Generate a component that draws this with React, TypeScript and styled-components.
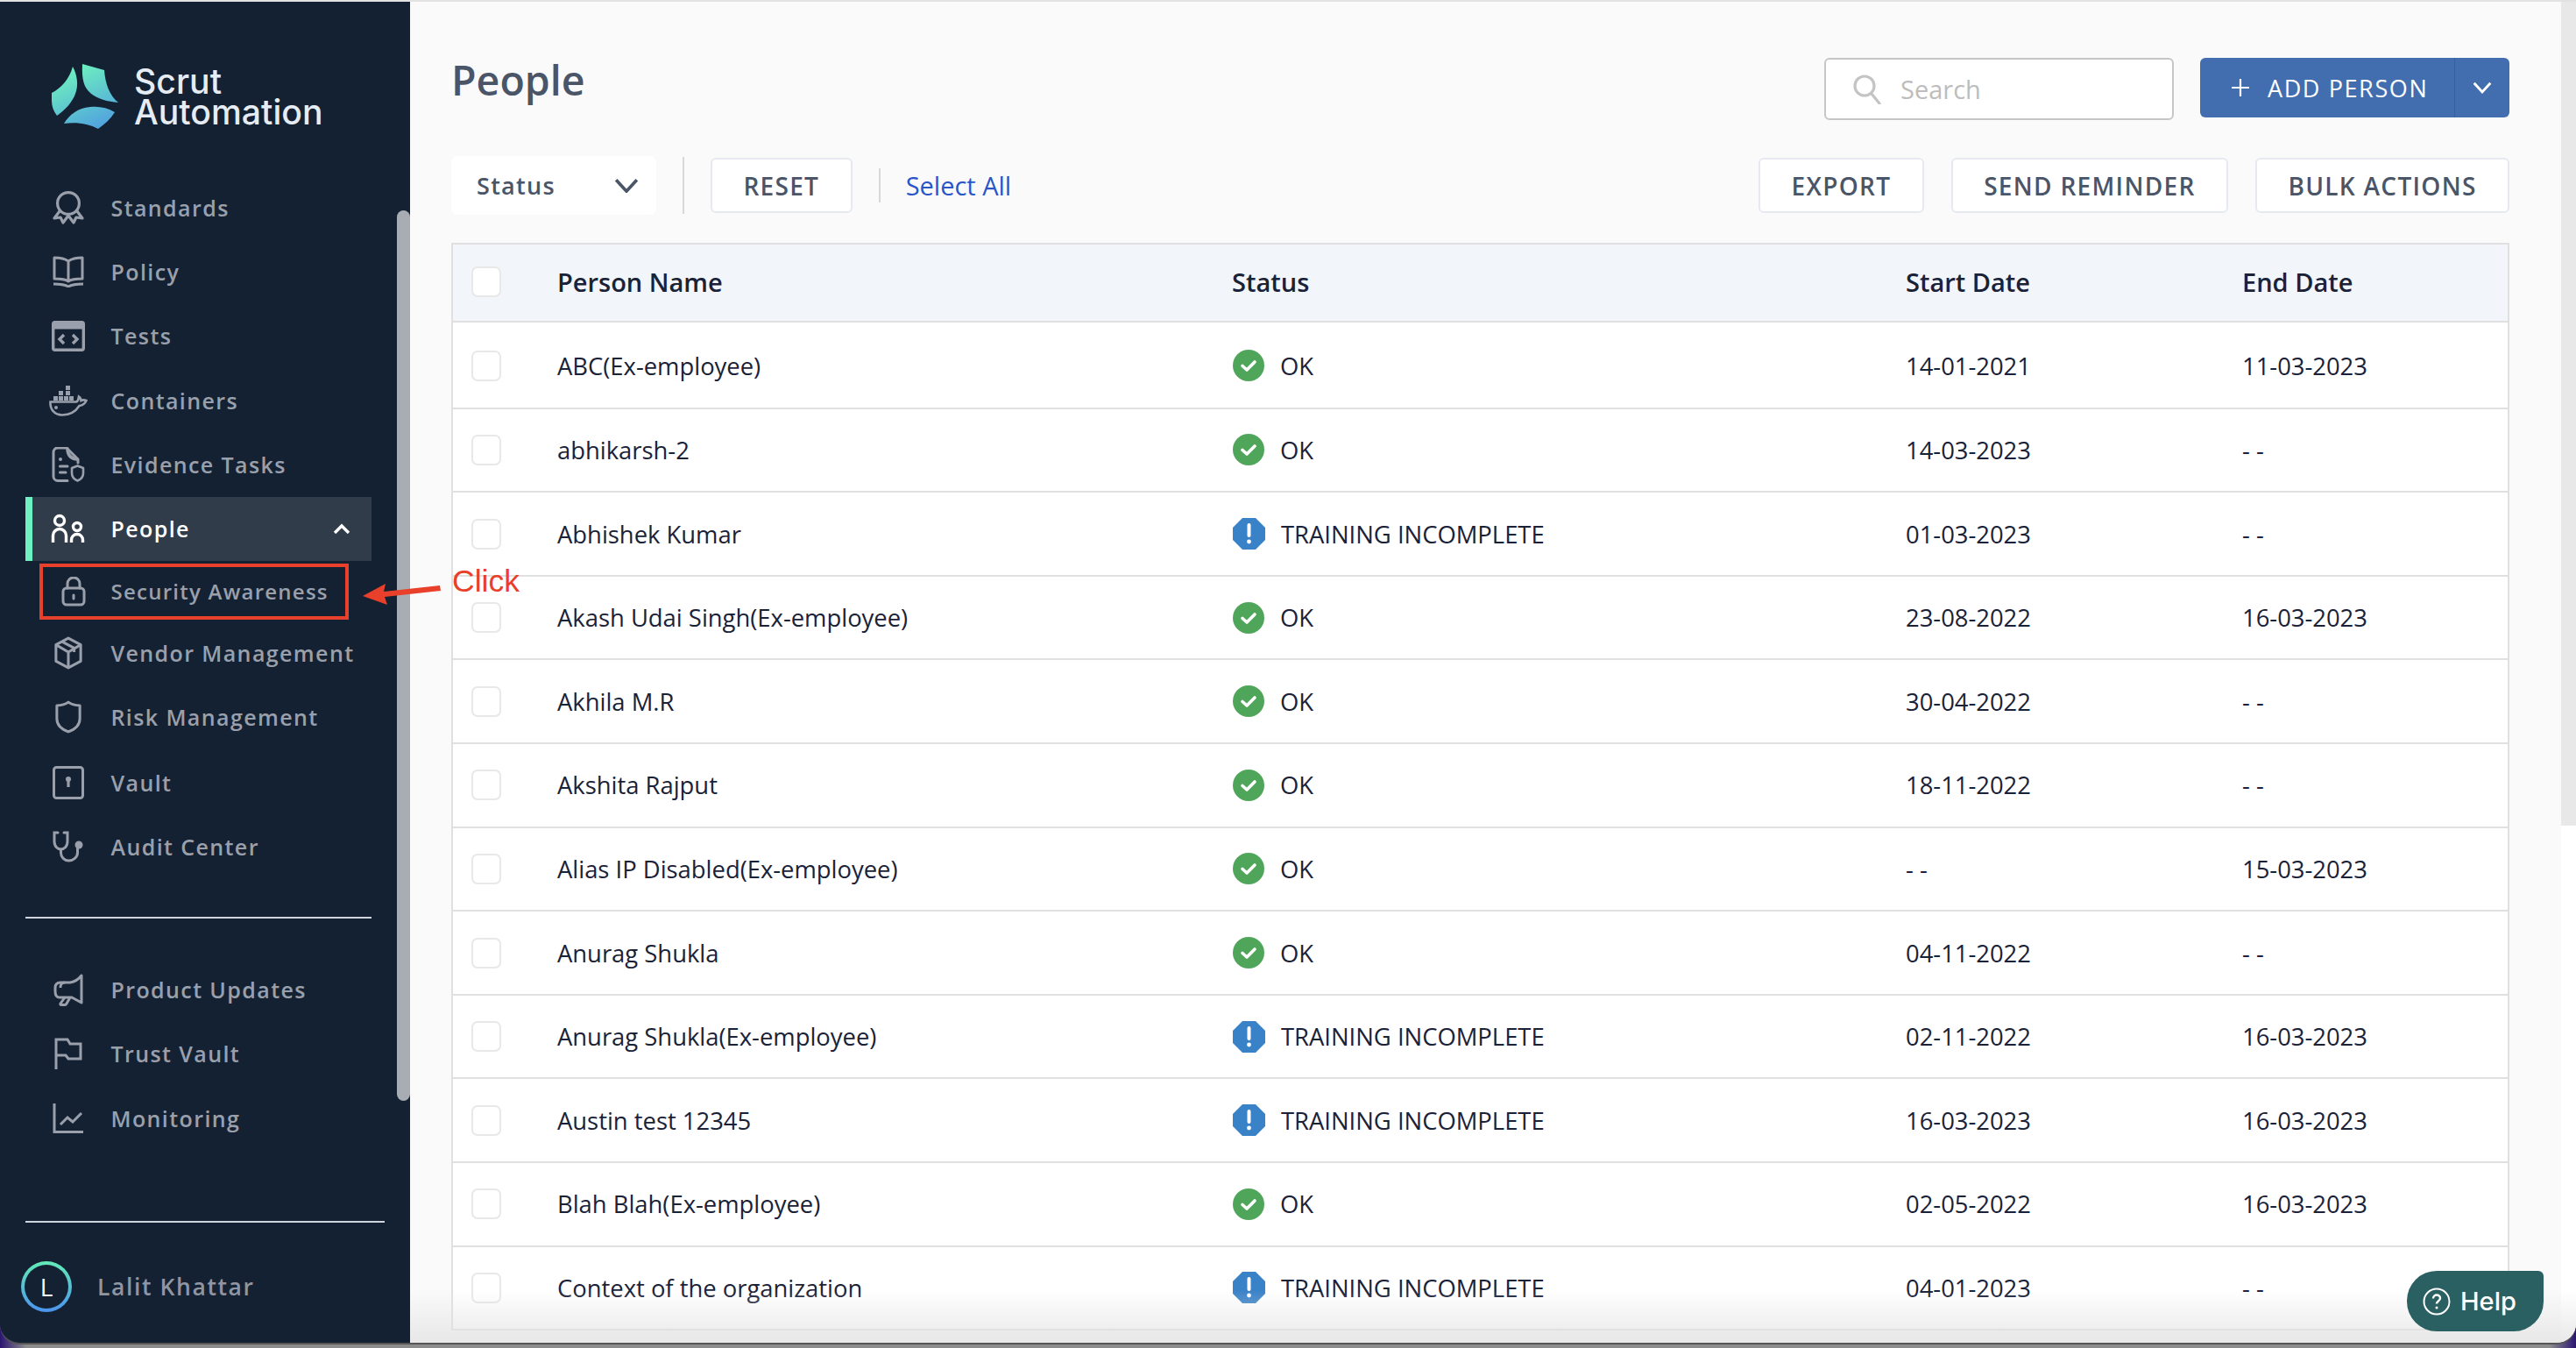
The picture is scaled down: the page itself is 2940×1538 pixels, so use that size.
import React from 'react';
import styled, { createGlobalStyle } from 'styled-components';

const GlobalStyle = createGlobalStyle`
  html, body {
    margin: 0;
    padding: 0;
    background: #8c8c8c;
  }
  * {
    box-sizing: border-box;
  }
`;

const Desktop = styled.div`
  width: 2940px;
  height: 1538px;
  overflow: hidden;
  display: flex;
  flex-direction: column;
  background: linear-gradient(90deg, #2a1470 0, #8c8c8c 30px, #8c8c8c 2910px, #2a1470 100%);
  font-family: "Open Sans", sans-serif;
`;

const TopEdge = styled.div`
  height: 2px;
  flex: none;
  background: #e2e2e2;
`;

const Window = styled.div`
  position: relative;
  height: 1530px;
  flex: none;
  display: flex;
  overflow: hidden;
  border-radius: 0 0 22px 22px;
  box-shadow: 0 2px 0 #555;
`;

const Sidebar = styled.aside`
  position: relative;
  width: 468px;
  flex: none;
  display: flex;
  flex-direction: column;
  background: #142133;
  padding-top: 70px;
`;

const SideScroll = styled.div`
  position: absolute;
  right: 0;
  top: 238px;
  width: 15px;
  height: 1016px;
  border-radius: 8px;
  background: #a8acb3;
`;

const Logo = styled.div`
  display: flex;
  align-items: center;
  gap: 18px;
  padding-left: 59px;
  height: 76px;
  margin-bottom: 52px;
`;

const LogoText = styled.div`
  font-family: Inter, sans-serif;
  font-size: 39.2px;
  font-weight: 500;
  line-height: 35px;
  color: #e6ecf4;
`;

const NavList = styled.nav<{ $top?: number }>`
  display: flex;
  flex-direction: column;
  margin-top: ${({ $top }) => $top ?? 0}px;
`;

const NavItem = styled.div<{ $active?: boolean; $height?: number }>`
  position: relative;
  display: flex;
  align-items: center;
  flex: none;
  height: ${({ $height }) => $height ?? 73.4}px;
  width: ${({ $active }) => ($active ? '395px' : '424px')};
  margin-left: 29px;
  padding-left: ${({ $active }) => ($active ? '22px' : '30px')};
  background: ${({ $active }) => ($active ? '#303c4a' : 'transparent')};
  border-left: ${({ $active }) => ($active ? '8px solid #6ef0c0' : '0')};
  color: ${({ $active }) => ($active ? '#ffffff' : '#9aa0ab')};
`;

const NavIcon = styled.span`
  width: 38px;
  height: 40px;
  flex: none;
  display: flex;
  align-items: center;
  justify-content: center;
  margin-right: 29.5px;
  svg {
    display: block;
    flex: none;
  }
`;

const NavLabel = styled.span<{ $small?: boolean }>`
  font-size: ${({ $small }) => ($small ? '24px' : '25px')};
  font-weight: 600;
  letter-spacing: ${({ $small }) => ($small ? '1.25px' : '1.4px')};
  white-space: nowrap;
  flex: 1;
`;

const NavChevron = styled.span`
  display: flex;
  margin-right: 24px;
`;

const SideRule = styled.div<{ $width: number; $top: number }>`
  height: 2px;
  width: ${({ $width }) => $width}px;
  margin: ${({ $top }) => $top}px 0 0 29px;
  flex: none;
  background: #cfd5dc;
`;

const User = styled.div`
  display: flex;
  align-items: center;
  gap: 29px;
  padding-left: 24px;
  margin-top: 44px;
`;

const Avatar = styled.div`
  width: 58px;
  height: 58px;
  border-radius: 50%;
  padding: 4px;
  background: linear-gradient(180deg, #63ecb8, #4b93ee);
  flex: none;
`;

const AvatarInner = styled.div`
  width: 100%;
  height: 100%;
  border-radius: 50%;
  background: #142133;
  color: #fff;
  display: flex;
  align-items: center;
  justify-content: center;
  font-size: 28px;
  font-weight: 500;
`;

const UserName = styled.div`
  font-size: 26.5px;
  font-weight: 600;
  letter-spacing: 1.6px;
  color: #8f95a1;
`;

const Main = styled.main`
  position: relative;
  flex: 1;
  min-width: 0;
  background: #fafafa;
  padding: 0 76px 0 47px;
`;

const PageScrollTrack = styled.div`
  position: absolute;
  right: 0;
  top: 0;
  bottom: 0;
  width: 17px;
  background: #ffffff;
`;

const PageScrollThumb = styled.div`
  width: 100%;
  height: 940px;
  background: #e8e8e8;
`;

const Header = styled.div`
  display: flex;
  align-items: flex-start;
  justify-content: space-between;
  height: 174px;
  padding-top: 64px;
`;

const Title = styled.h1`
  margin: -4px 0 0;
  font-size: 46.5px;
  line-height: 58px;
  font-weight: 600;
  color: #4a5568;
`;

const HeaderRight = styled.div`
  display: flex;
  gap: 30px;
`;

const SearchBox = styled.div`
  width: 399px;
  height: 71px;
  display: flex;
  align-items: center;
  gap: 22px;
  padding-left: 31px;
  background: #fff;
  border: 2px solid #c6c6c6;
  border-radius: 6px;
  color: #bdbdbd;
  font-size: 29px;
`;

const AddPerson = styled.div`
  width: 353px;
  height: 68px;
  display: flex;
  border-radius: 6px;
  background: #426eb0;
  color: #fff;
`;

const AddMain = styled.div`
  width: 291px;
  display: flex;
  align-items: center;
  gap: 21px;
  padding-left: 36px;
  font-size: 27px;
  font-weight: 500;
  letter-spacing: 1.6px;
  white-space: nowrap;
  border-right: 1px solid #35609f;
`;

const AddCaret = styled.div`
  flex: 1;
  display: flex;
  align-items: center;
  justify-content: center;
`;

const Filters = styled.div`
  display: flex;
  align-items: center;
  height: 67px;
  margin-top: 2px;
`;

const StatusSelect = styled.div`
  width: 234px;
  height: 67px;
  display: flex;
  align-items: center;
  justify-content: space-between;
  padding: 0 20px 0 29px;
  background: #fff;
  border-radius: 7px;
  font-size: 27px;
  font-weight: 600;
  letter-spacing: 1.3px;
  color: #4a5568;
`;

const VRule = styled.div<{ $height: number; $gap: number; $after: number }>`
  width: 2px;
  height: ${({ $height }) => $height}px;
  margin: 0 ${({ $after }) => $after}px 0 ${({ $gap }) => $gap}px;
  background: #d8d8d8;
`;

const OutlineButton = styled.button`
  height: 63px;
  padding: 0 35.4px;
  background: #fff;
  border: 2px solid #e6eaf0;
  border-radius: 6px;
  font-family: inherit;
  font-size: 28px;
  font-weight: 600;
  letter-spacing: 1.3px;
  color: #4a5568;
  white-space: nowrap;
`;

const SelectAll = styled.a`
  font-size: 29px;
  color: #2a55c8;
  white-space: nowrap;
`;

const Spacer = styled.div`
  flex: 1;
`;

const Actions = styled.div`
  display: flex;
  gap: 31px;
`;

const Table = styled.div`
  margin-top: 32px;
  border: 2px solid #e0e0e0;
  border-bottom: 0;
  background: #fff;
  color: #1a2238;
`;

const columns = '119px 770px 769px 384px 1fr';

const HeadRow = styled.div`
  display: grid;
  grid-template-columns: ${columns};
  align-items: center;
  height: 89px;
  padding-bottom: 2px;
  background: #f2f5f9;
  border-bottom: 2px solid #e0e0e0;
  font-size: 29px;
  font-weight: 600;
`;

const Row = styled.div<{ $first?: boolean }>`
  display: grid;
  grid-template-columns: ${columns};
  align-items: center;
  height: ${({ $first }) => ($first ? '98.7px' : '95.6px')};
  padding-top: ${({ $first }) => ($first ? '2px' : '0')};
  border-bottom: 2px solid #e0e0e0;
  font-size: 27.4px;
`;

const CheckCell = styled.div`
  padding-left: 21px;
`;

const Checkbox = styled.div`
  width: 34px;
  height: 35px;
  background: #fff;
  border: 2px solid #e8e8e8;
  border-radius: 7px;
`;

const StatusCell = styled.div`
  display: flex;
  align-items: center;
  gap: 18px;
  svg {
    flex: none;
    margin-left: 1px;
  }
`;

const HelpButton = styled.div`
  position: absolute;
  right: 37px;
  top: 1448px;
  width: 156px;
  height: 69px;
  display: flex;
  align-items: center;
  gap: 11px;
  padding-left: 18px;
  background: #2a6062;
  border-radius: 34px 6px 34px 34px;
  color: #fff;
  font-family: Inter, sans-serif;
  font-size: 29px;
  font-weight: 500;
`;

const BottomFade = styled.div`
  position: absolute;
  left: 0;
  right: 0;
  bottom: 0;
  height: 60px;
  background: linear-gradient(180deg, rgba(230, 230, 230, 0), rgba(225, 225, 225, 0.75));
  pointer-events: none;
`;

const RedBox = styled.div`
  position: absolute;
  left: 45px;
  top: 641px;
  width: 353px;
  height: 64px;
  border: 4px solid #e8402a;
`;

const ClickArrow = styled.svg`
  position: absolute;
  left: 410px;
  top: 655px;
`;

const ClickLabel = styled.div`
  position: absolute;
  left: 516px;
  top: 640px;
  font-family: "Liberation Sans", sans-serif;
  font-size: 35.5px;
  line-height: 42px;
  color: #e8402a;
`;

const stroke = '#9aa0ab';

const Standards = () => (
  <svg width="36" height="38" viewBox="0 0 36 38" fill="none" stroke={stroke} strokeWidth="3.2" strokeLinejoin="round">
    <circle cx="18" cy="14" r="12.4" />
    <path d="M8 23 2 31l7-1 3 6 6-8 6 8 3-6 7 1-6-8" />
  </svg>
);
const Policy = () => (
  <svg width="36" height="36" viewBox="0 0 36 36" fill="none" stroke={stroke} strokeWidth="3" strokeLinejoin="round">
    <path d="M18 6C14 3 8 2 2 2v24c6 0 12 0 16 3 4-3 10-3 16-3V2c-6 0-12 1-16 4ZM18 6v23" />
    <path d="M1 32c6 0 12 0 17 3 5-3 11-3 17-3" />
  </svg>
);
const Tests = () => (
  <svg width="38" height="35" viewBox="0 0 38 35" fill="none" stroke={stroke} strokeWidth="3.4">
    <rect x="1.7" y="1.7" width="34.6" height="31.6" rx="2" />
    <path d="M1.5 5.5h35" strokeWidth="8" />
    <path d="M14 16l-5 5 5 5M24 16l5 5-5 5" strokeWidth="3.4" />
  </svg>
);
const dockerBlocks = [
  [19, 1], [11, 7], [19, 7], [5, 13], [11, 13], [17, 13], [23, 13],
];
const Containers = () => (
  <svg width="44" height="36" viewBox="0 0 44 36" fill="none" stroke={stroke} strokeWidth="2.6">
    {dockerBlocks.map(([x, y]) => (
      <rect key={`${x}-${y}`} x={x} y={y} width="5" height="5" fill={stroke} stroke="none" />
    ))}
    <path d="M1.5 19.5h29c2 0 3-2 3.5-6 1.5 1 2.5 3 2.5 4.5 2-.8 4-.8 6 0-1.5 3.5-4.5 5.5-8 6C30 31 24 34.5 15 34.5 6 34.5 1 28 1.5 19.5Z" />
    <circle cx="8" cy="26" r="2" fill={stroke} stroke="none" />
  </svg>
);
const Evidence = () => (
  <svg width="38" height="40" viewBox="0 0 38 40" fill="none" stroke={stroke} strokeWidth="3" strokeLinecap="round" strokeLinejoin="round">
    <path d="M18 38.5H7a5 5 0 0 1-5-5V6a5 5 0 0 1 5-5h10l13 13v4" />
    <path d="M18 2c0 7 3 11 11 12-5 0-11-3-11-12Z" strokeWidth="3.5" />
    <circle cx="10" cy="14" r="2" fill={stroke} stroke="none" />
    <path d="M9.5 22H18M9.5 29H16" />
    <path d="M29.5 21.5l6.5 2.5v6c0 4-3 7-6.500 8.500-3.500-1.500-6.500-4.500-6.500-8.500v-6Z" strokeWidth="2.6" />
  </svg>
);
const PeopleIcon = () => (
  <svg width="40" height="34" viewBox="0 0 40 34" fill="none" stroke="#fff" strokeWidth="3.4">
    <circle cx="10" cy="8" r="5.5" />
    <circle cx="30" cy="15" r="4.5" />
    <path d="M2.5 33v-8a7.500 7.500 0 0 1 15 0v8M23.5 33v-3a6.500 6.500 0 0 1 13 0v3" />
  </svg>
);
const Lock = () => (
  <svg width="40" height="34" viewBox="-12 0 40 34" fill="none" stroke={stroke} strokeWidth="3" strokeLinecap="round">
    <rect x="2" y="13" width="24" height="19" rx="4" />
    <path d="M7 13V8a7 7 0 0 1 14 0v5M14 21v4" />
  </svg>
);
const Cube = () => (
  <svg width="32" height="38" viewBox="0 0 34 40" fill="none" stroke={stroke} strokeWidth="3.2" strokeLinejoin="round">
    <path d="M17 2 32 10v20L17 38 2 30V10Z" />
    <path d="M2 10l15 9 15-9M17 19v19M9 6l15 8v5" />
  </svg>
);
const Shield = () => (
  <svg width="30" height="38" viewBox="0 0 32 40" fill="none" stroke={stroke} strokeWidth="3.2" strokeLinejoin="round">
    <path d="M16 2c4 3 9 4 14 4v16c0 8-6 13-14 16C8 35 2 30 2 22V6c5 0 10-1 14-4Z" />
  </svg>
);
const VaultIcon = () => (
  <svg width="36" height="38" viewBox="0 0 36 38" fill="none" stroke={stroke} strokeWidth="3">
    <rect x="1.5" y="1.5" width="33" height="35" rx="3" />
    <circle cx="18" cy="15" r="3" fill={stroke} stroke="none" />
    <path d="M18 15v9" strokeWidth="3.2" />
  </svg>
);
const Stethoscope = () => (
  <svg width="36" height="36" viewBox="0 0 36 36" fill="none" stroke={stroke} strokeWidth="3" strokeLinecap="round">
    <path d="M6 2H2v10c0 6 4 9 7.500 9S17 18 17 12V2h-4" />
    <path d="M9.500 21v4c0 5 4 9 9 9s10-4 10-9v-5" />
    <circle cx="30" cy="16" r="4.500" fill={stroke} stroke="none" />
  </svg>
);
const Megaphone = () => (
  <svg width="34" height="37" viewBox="0 0 34 37" fill="none" stroke={stroke} strokeWidth="3" strokeLinejoin="round">
    <path d="M32 2v31l-11-6H7c-3.500 0-5-3-5-7v-4c0-4 2-6 6-6h11c6-1 10-4 13-8Z" />
    <path d="M13 10c-3 0-5 2-5 5v1M13 27l-5 7c-.5 1 0 1.500 1 1.500h4c1 0 1.500-.5 2-1.500l4-7" />
  </svg>
);
const Flag = () => (
  <svg width="32" height="36" viewBox="0 0 32 36" fill="none" stroke={stroke} strokeWidth="3">
    <path d="M2 36V2h13l3 5h12v17H16l-3-4H2" />
  </svg>
);
const ChartIcon = () => (
  <svg width="36" height="34" viewBox="0 0 36 34" fill="none" stroke={stroke} strokeWidth="3">
    <path d="M2 0v32.500h33" />
    <path d="M9 24l8-8 6 5 10-10" />
  </svg>
);
const ChevronUp = () => (
  <svg width="20" height="12" viewBox="0 0 20 12" fill="none" stroke="#fff" strokeWidth="3.4">
    <path d="M2 11l8-8 8 8" />
  </svg>
);
const Mark = () => (
  <svg width="76" height="74" viewBox="0 0 76 74">
    <defs>
      <linearGradient id="mark" gradientUnits="userSpaceOnUse" x1="25" y1="0" x2="60" y2="74">
        <stop offset="0" stopColor="#6ff3bd" />
        <stop offset="1" stopColor="#4f9fe0" />
      </linearGradient>
    </defs>
    <path
      fill="url(#mark)"
      d="M24 3C29 12 31 24 27 34 24 43 15 53 6 59 2 54 0 48 0 42L0 33C10 28 20 18 24 3ZM35 0 60 7C61 22 66 36 76 44 64 43 52 40 44 33 37 27 34 18 35 0ZM14 68C20 58 30 50 44 49 54 48 64 50 72 55 67 63 60 69 53 74 42 68 28 66 14 68Z"
    />
  </svg>
);
const SearchIcon = () => (
  <svg width="32" height="34" viewBox="0 0 32 34" fill="none" stroke="#c4c4c4" strokeWidth="3.2" strokeLinecap="round">
    <circle cx="13" cy="13" r="11" />
    <path d="M21 22l9 11" />
  </svg>
);
const PlusIcon = () => (
  <svg width="20" height="20" viewBox="0 0 20 20" stroke="#fff" strokeWidth="2.2">
    <path d="M10 0v20M0 10h20" />
  </svg>
);
const Caret = ({ color, width }: { color: string; width: number }) => (
  <svg width={width} height={width * 0.62} viewBox="0 0 26 16" fill="none" stroke={color} strokeWidth="3.4">
    <path d="M2 2l11 12L24 2" />
  </svg>
);
const OkIcon = () => (
  <svg width="36" height="36" viewBox="0 0 36 36">
    <circle cx="18" cy="18" r="18" fill="#4fa65a" />
    <path d="M11 18.500l5 4.500 9-9" fill="none" stroke="#fff" strokeWidth="3.6" strokeLinecap="round" strokeLinejoin="round" />
  </svg>
);
const WarnIcon = () => (
  <svg width="37" height="36" viewBox="0 0 37 36">
    <path d="M11 0h15l11 11v14L26 36H11L0 25V11Z" fill="#3a82c8" />
    <path d="M18.500 8v12" stroke="#fff" strokeWidth="4" strokeLinecap="round" />
    <circle cx="18.5" cy="27" r="2.4" fill="#fff" />
  </svg>
);
const HelpIcon = () => (
  <svg width="32" height="32" viewBox="0 0 32 32" fill="none" stroke="#fff" strokeWidth="2">
    <circle cx="16" cy="16" r="14.5" />
    <path d="M12 12.500c0-2.500 2-4 4-4s4 1.500 4 3.700c0 3-4 3.300-4 6.300" strokeWidth="2.4" />
    <circle cx="16" cy="23" r="1.5" fill="#fff" stroke="none" />
  </svg>
);

const topNav = [
  { label: 'Standards', icon: <Standards /> },
  { label: 'Policy', icon: <Policy /> },
  { label: 'Tests', icon: <Tests /> },
  { label: 'Containers', icon: <Containers /> },
  { label: 'Evidence Tasks', icon: <Evidence /> },
];
const subNav = [
  { label: 'Security Awareness', icon: <Lock />, height: 70, small: true },
  { label: 'Vendor Management', icon: <Cube />, height: 71 },
  { label: 'Risk Management', icon: <Shield />, height: 75 },
  { label: 'Vault', icon: <VaultIcon />, height: 73.3 },
  { label: 'Audit Center', icon: <Stethoscope />, height: 73.3 },
];
const bottomNav = [
  { label: 'Product Updates', icon: <Megaphone /> },
  { label: 'Trust Vault', icon: <Flag /> },
  { label: 'Monitoring', icon: <ChartIcon /> },
];

const people = [
  ['ABC(Ex-employee)', 'OK', '14-01-2021', '11-03-2023'],
  ['abhikarsh-2', 'OK', '14-03-2023', '- -'],
  ['Abhishek Kumar', 'TRAINING INCOMPLETE', '01-03-2023', '- -'],
  ['Akash Udai Singh(Ex-employee)', 'OK', '23-08-2022', '16-03-2023'],
  ['Akhila M.R', 'OK', '30-04-2022', '- -'],
  ['Akshita Rajput', 'OK', '18-11-2022', '- -'],
  ['Alias IP Disabled(Ex-employee)', 'OK', '- -', '15-03-2023'],
  ['Anurag Shukla', 'OK', '04-11-2022', '- -'],
  ['Anurag Shukla(Ex-employee)', 'TRAINING INCOMPLETE', '02-11-2022', '16-03-2023'],
  ['Austin test 12345', 'TRAINING INCOMPLETE', '16-03-2023', '16-03-2023'],
  ['Blah Blah(Ex-employee)', 'OK', '02-05-2022', '16-03-2023'],
  ['Context of the organization', 'TRAINING INCOMPLETE', '04-01-2023', '- -'],
];

const App = () => (
  <Desktop>
    <GlobalStyle />
    <TopEdge />
    <Window>
      <Sidebar>
        <Logo>
          <Mark />
          <LogoText>
            Scrut
            <br />
            Automation
          </LogoText>
        </Logo>
        <NavList>
          {topNav.map((item) => (
            <NavItem key={item.label}>
              <NavIcon>{item.icon}</NavIcon>
              <NavLabel>{item.label}</NavLabel>
            </NavItem>
          ))}
          <NavItem $active $height={73}>
            <NavIcon>
              <PeopleIcon />
            </NavIcon>
            <NavLabel>People</NavLabel>
            <NavChevron>
              <ChevronUp />
            </NavChevron>
          </NavItem>
          {subNav.map((item) => (
            <NavItem key={item.label} $height={item.height}>
              <NavIcon>{item.icon}</NavIcon>
              <NavLabel $small={item.small}>{item.label}</NavLabel>
            </NavItem>
          ))}
        </NavList>
        <SideRule $width={395} $top={43.3} />
        <NavList $top={44.5}>
          {bottomNav.map((item) => (
            <NavItem key={item.label}>
              <NavIcon>{item.icon}</NavIcon>
              <NavLabel>{item.label}</NavLabel>
            </NavItem>
          ))}
        </NavList>
        <SideRule $width={410} $top={80} />
        <User>
          <Avatar>
            <AvatarInner>L</AvatarInner>
          </Avatar>
          <UserName>Lalit Khattar</UserName>
        </User>
        <SideScroll />
      </Sidebar>
      <Main>
        <PageScrollTrack>
          <PageScrollThumb />
        </PageScrollTrack>
        <Header>
          <Title>People</Title>
          <HeaderRight>
            <SearchBox>
              <SearchIcon />
              Search
            </SearchBox>
            <AddPerson>
              <AddMain>
                <PlusIcon />
                ADD PERSON
              </AddMain>
              <AddCaret>
                <Caret color="#fff" width={22} />
              </AddCaret>
            </AddPerson>
          </HeaderRight>
        </Header>
        <Filters>
          <StatusSelect>
            Status
            <Caret color="#4a5568" width={28} />
          </StatusSelect>
          <VRule $height={65} $gap={30} $after={30} />
          <OutlineButton>RESET</OutlineButton>
          <VRule $height={39} $gap={30} $after={29} />
          <SelectAll>Select All</SelectAll>
          <Spacer />
          <Actions>
            <OutlineButton>EXPORT</OutlineButton>
            <OutlineButton>SEND REMINDER</OutlineButton>
            <OutlineButton>BULK ACTIONS</OutlineButton>
          </Actions>
        </Filters>
        <Table>
          <HeadRow>
            <CheckCell>
              <Checkbox />
            </CheckCell>
            <div>Person Name</div>
            <div>Status</div>
            <div>Start Date</div>
            <div>End Date</div>
          </HeadRow>
          {people.map(([name, status, start, end], i) => (
            <Row key={name} $first={i === 0}>
              <CheckCell>
                <Checkbox />
              </CheckCell>
              <div>{name}</div>
              <StatusCell>
                {status === 'OK' ? <OkIcon /> : <WarnIcon />}
                {status}
              </StatusCell>
              <div>{start}</div>
              <div>{end}</div>
            </Row>
          ))}
        </Table>
        <BottomFade />
        <HelpButton>
          <HelpIcon />
          Help
        </HelpButton>
      </Main>
      <RedBox />
      <ClickArrow width="100" height="40" viewBox="0 0 100 40">
        <path d="M4 23 30 9l-2 9 64-7 1 6-64 7 3 9Z" fill="#e8402a" />
      </ClickArrow>
      <ClickLabel>Click</ClickLabel>
    </Window>
  </Desktop>
);

export default App;
